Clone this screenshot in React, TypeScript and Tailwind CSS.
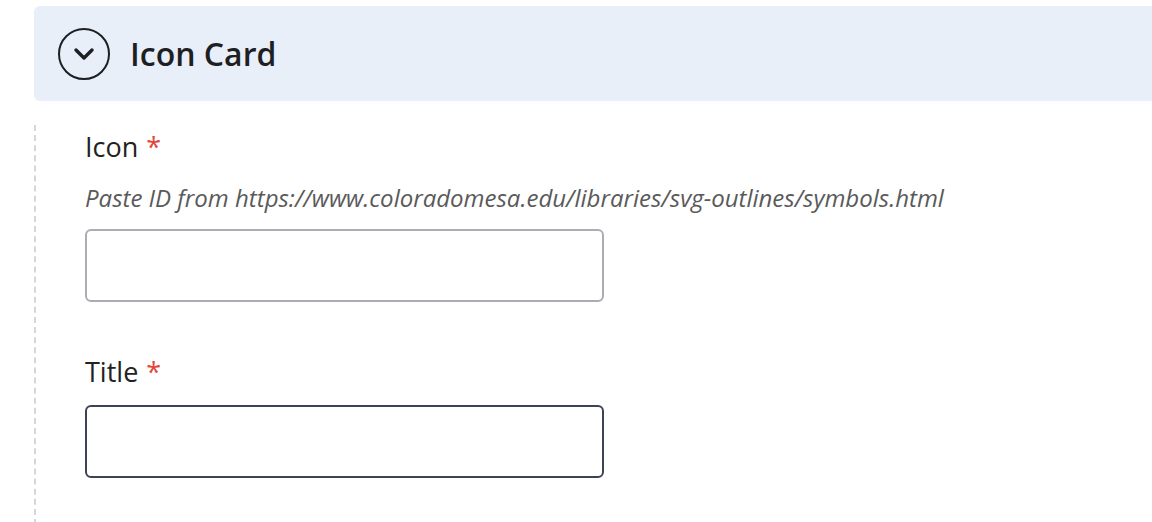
import React from 'react'

const font = { fontFamily: '"Open Sans", "Liberation Sans", sans-serif' }

function Field({ label, help, focused }: { label: string; help?: string; focused?: boolean }) {
  return (
    <div className="flex flex-col">
      <label className="text-[27px] leading-[36px] text-[#222]">
        {label}
        <span className="ml-[8px] text-[#e0483a]">*</span>
      </label>
      {help && (
        <p className="mt-[16px] text-[24px] leading-[33px] italic text-[#5a5a5a]">{help}</p>
      )}
      <input
        type="text"
        className={
          focused
            ? 'mt-[15px] h-[73px] w-[519px] rounded-[6px] border-2 border-[#3b4354] bg-white px-3 outline-none'
            : 'mt-[15px] h-[73px] w-[519px] rounded-[6px] border-2 border-[#aaadb1] bg-white px-3 outline-none'
        }
      />
    </div>
  )
}

export default function App() {
  return (
    <div className="h-[522px] w-[1152px] overflow-hidden bg-white pt-[6px]" style={font}>
      {/* Header */}
      <div className="ml-[34px] flex h-[95px] items-center rounded-l-[6px] bg-[#e8eff8] pl-[24px]">
        <div className="flex h-[52px] w-[52px] items-center justify-center rounded-full border-2 border-[#1e1f23]">
          <svg width="22" height="14" viewBox="0 0 22 14" fill="none">
            <path d="M3 3l8 8 8-8" stroke="#1e1f23" strokeWidth="3.4" strokeLinecap="round" strokeLinejoin="round" />
          </svg>
        </div>
        <h2 className="ml-[20px] text-[32px] font-semibold text-[#1e1f23]">Icon Card</h2>
      </div>

      {/* Body */}
      <div className="ml-[34px] mt-[24px] flex h-[400px] flex-col gap-[52px] border-l-2 border-dashed border-[#d3d6da] pl-[49px] pt-[4px]">
        <Field label="Icon" help="Paste ID from https://www.coloradomesa.edu/libraries/svg-outlines/symbols.html" />
        <Field label="Title" focused />
      </div>
    </div>
  )
}
